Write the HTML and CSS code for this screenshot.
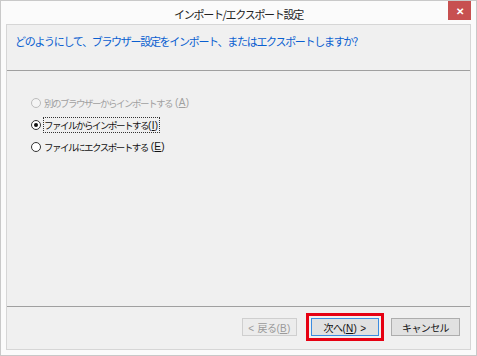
FILE: index.html
```html
<!DOCTYPE html>
<html lang="ja">
<head>
    <meta charset="UTF-8">
    <title>インポート/エクスポート設定</title>
    <link rel="stylesheet" href="styles.css">
</head>
<body>
    <div class="window">
        <div class="titlebar">
            <span></span>
            <span class="title">インポート/エクスポート設定</span>
            <span class="close">✕</span>
        </div>
        <div class="content">
            <div class="header">どのようにして、ブラウザー設定をインポート、またはエクスポートしますか?</div>
            <div class="options">
                <label class="option disabled"><span class="radio"></span>別のブラウザーからインポートする<span class="hw">(<u>A</u>)</span></label>
                <label class="option"><span class="radio checked"></span><span class="focus">ファイルからインポートする<span class="hw">(<u>I</u>)</span></span></label>
                <label class="option"><span class="radio"></span>ファイルにエクスポートする<span class="hw">(<u>E</u>)</span></label>
            </div>
            <div class="footer">
                <button class="btn back" disabled><span class="hw">&lt; </span>戻る<span class="hw">(<u>B</u>)</span></button>
                <button class="btn primary">次へ<span class="hw">(<u>N</u>) &gt;</span></button>
                <button class="btn cancel">キャンセル</button>
            </div>
        </div>
    </div>
</body>
</html>
```

FILE: styles.css
```css
body {
    margin: 0;
    font-family: "Noto Sans CJK JP", "Noto Sans", sans-serif;
    background: #fff;
}

.window {
    width: 477px;
    height: 356px;
    box-sizing: border-box;
    border: 1px solid #c9c9c9;
    background: #fbfbfb;
    padding: 0 5px 5px 5px;
    display: flex;
    flex-direction: column;
}

.titlebar {
    height: 23px;
    display: grid;
    grid-template-columns: 1fr auto 1fr;
    align-items: center;
}

.title {
    font-size: 11px;
    color: #222;
    letter-spacing: -1.3px;
    padding-top: 2px;
}

.close {
    justify-self: end;
    align-self: start;
    width: 23px;
    height: 19px;
    background: #c75050;
    color: #fff;
    font-size: 10px;
    font-weight: bold;
    display: flex;
    align-items: center;
    justify-content: center;
}

.content {
    flex: 1;
    background: #f0f0f0;
    border: 1px solid #d6d6d6;
    display: flex;
    flex-direction: column;
}

.header {
    height: 46px;
    box-sizing: border-box;
    padding: 8px 8px 0;
    border-bottom: 1px solid #a0a0a0;
    color: #0a5fd0;
    font-size: 11px;
    letter-spacing: -1.3px;
}

.options {
    flex: 1;
    padding: 23px 0 0 24px;
    display: flex;
    flex-direction: column;
    gap: 5px;
}

.option {
    display: flex;
    align-items: center;
    gap: 3px;
    height: 17px;
    font-size: 9.5px;
    color: #111;
    letter-spacing: -1.5px;
}

.hw {
    letter-spacing: 0.3px;
    font-family: "Liberation Sans", sans-serif;
}

.option .hw {
    font-size: 10px;
}

.option.disabled {
    color: #a0a0a0;
}

.radio {
    width: 10px;
    height: 10px;
    box-sizing: border-box;
    border: 1px solid #333;
    border-radius: 50%;
    background: #fff;
    display: flex;
    align-items: center;
    justify-content: center;
}

.option.disabled .radio {
    border-color: #bcbcbc;
    background: #f4f4f4;
}

.radio.checked::after {
    content: "";
    width: 4px;
    height: 4px;
    border-radius: 50%;
    background: #111;
}

.focus {
    outline: 1px dotted #333;
    padding-right: 1px;
}

.footer {
    height: 43px;
    box-sizing: border-box;
    border-top: 1px solid #a0a0a0;
    display: flex;
    justify-content: flex-end;
    align-items: center;
    padding: 0 10px 2px 0;
}

.btn {
    height: 18px;
    width: 68px;
    padding: 0;
    font-family: inherit;
    font-size: 10px;
    letter-spacing: -0.6px;
    color: #111;
    background: #e1e1e1;
    border: 1px solid #adadad;
}

.btn .hw {
    white-space: pre;
}

.btn.back {
    width: 55px;
    margin-right: 14px;
    color: #9a9a9a;
    background: #ececec;
    border-color: #cfcfcf;
}

.btn.primary {
    margin-right: 12px;
    border-color: #3c8ce0;
    outline: 3px solid #e60012;
    outline-offset: 2px;
}

.btn.cancel {
    width: 69px;
}
```
